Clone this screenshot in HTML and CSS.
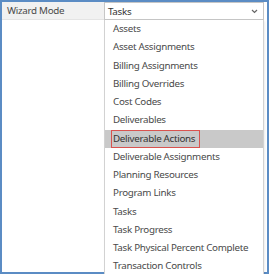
FILE: index.html
```html
<!DOCTYPE html>
<html lang="en">
  <head>
    <meta charset="UTF-8" />
    <title>Wizard Mode</title>
    <link rel="stylesheet" href="styles.css">
  </head>
  <body>
    <div class="frame">
      <div class="field-row">
        <div class="field-label">Wizard Mode</div>
        <div class="select">
          <span>Tasks</span>
          <svg class="caret" width="7" height="5" viewBox="0 0 7 5">
            <path d="M1 1 L3.5 3.5 L6 1" fill="none" stroke="#666" stroke-width="1.2" />
          </svg>
        </div>
      </div>
      <ul class="options">
        <li>Assets</li>
        <li>Asset Assignments</li>
        <li>Billing Assignments</li>
        <li>Billing Overrides</li>
        <li>Cost Codes</li>
        <li>Deliverables</li>
        <li class="active"><span>Deliverable Actions</span></li>
        <li>Deliverable Assignments</li>
        <li>Planning Resources</li>
        <li>Program Links</li>
        <li>Tasks</li>
        <li>Task Progress</li>
        <li>Task Physical Percent Complete</li>
        <li>Transaction Controls</li>
      </ul>
    </div>
  </body>
</html>
```

FILE: styles.css
```css
/* Reset */
* {
  box-sizing: border-box;
  margin: 0;
  padding: 0;
}

body {
  font-family: "Noto Sans", "Open Sans", sans-serif;
  font-size: 9.8px;
  letter-spacing: -0.3px;
  color: #4a4a4a;
  background: #fff;
}

/* Outer window frame */
.frame {
  position: relative;
  width: 269px;
  height: 274px;
  border: 2px solid #5b8cc4;
  background: #fff;
}

/* Top field row */
.field-row {
  display: flex;
  height: 18px;
}

.field-label {
  width: 102px;
  background: #f1f1f1;
  border-bottom: 1px solid #e4e4e4;
  padding-left: 5px;
  line-height: 17px;
}

.select {
  display: flex;
  align-items: center;
  justify-content: space-between;
  width: 160px;
  border: 1px solid #c6c6c6;
  background: #fff;
  padding: 0 5px 0 3px;
  color: #333;
}

/* Dropdown list */
.options {
  position: absolute;
  top: 18px;
  left: 102px;
  width: 160px;
  list-style: none;
  background: #fff;
  border: 1px solid #d2d2d2;
  border-top: none;
  padding: 0 0 3px;
  box-shadow: 1px 1px 2px rgba(0, 0, 0, 0.08);
}

.options li {
  height: 18.25px;
  line-height: 18px;
  padding-left: 8px;
  white-space: nowrap;
}

.options li.active {
  background: #c9c9c9;
  padding-left: 6px;
}

.options li.active span {
  display: inline-block;
  border: 1px solid #d9534f;
  padding: 0 4px 0 1px;
  line-height: 16px;
  color: #333;
}
```
